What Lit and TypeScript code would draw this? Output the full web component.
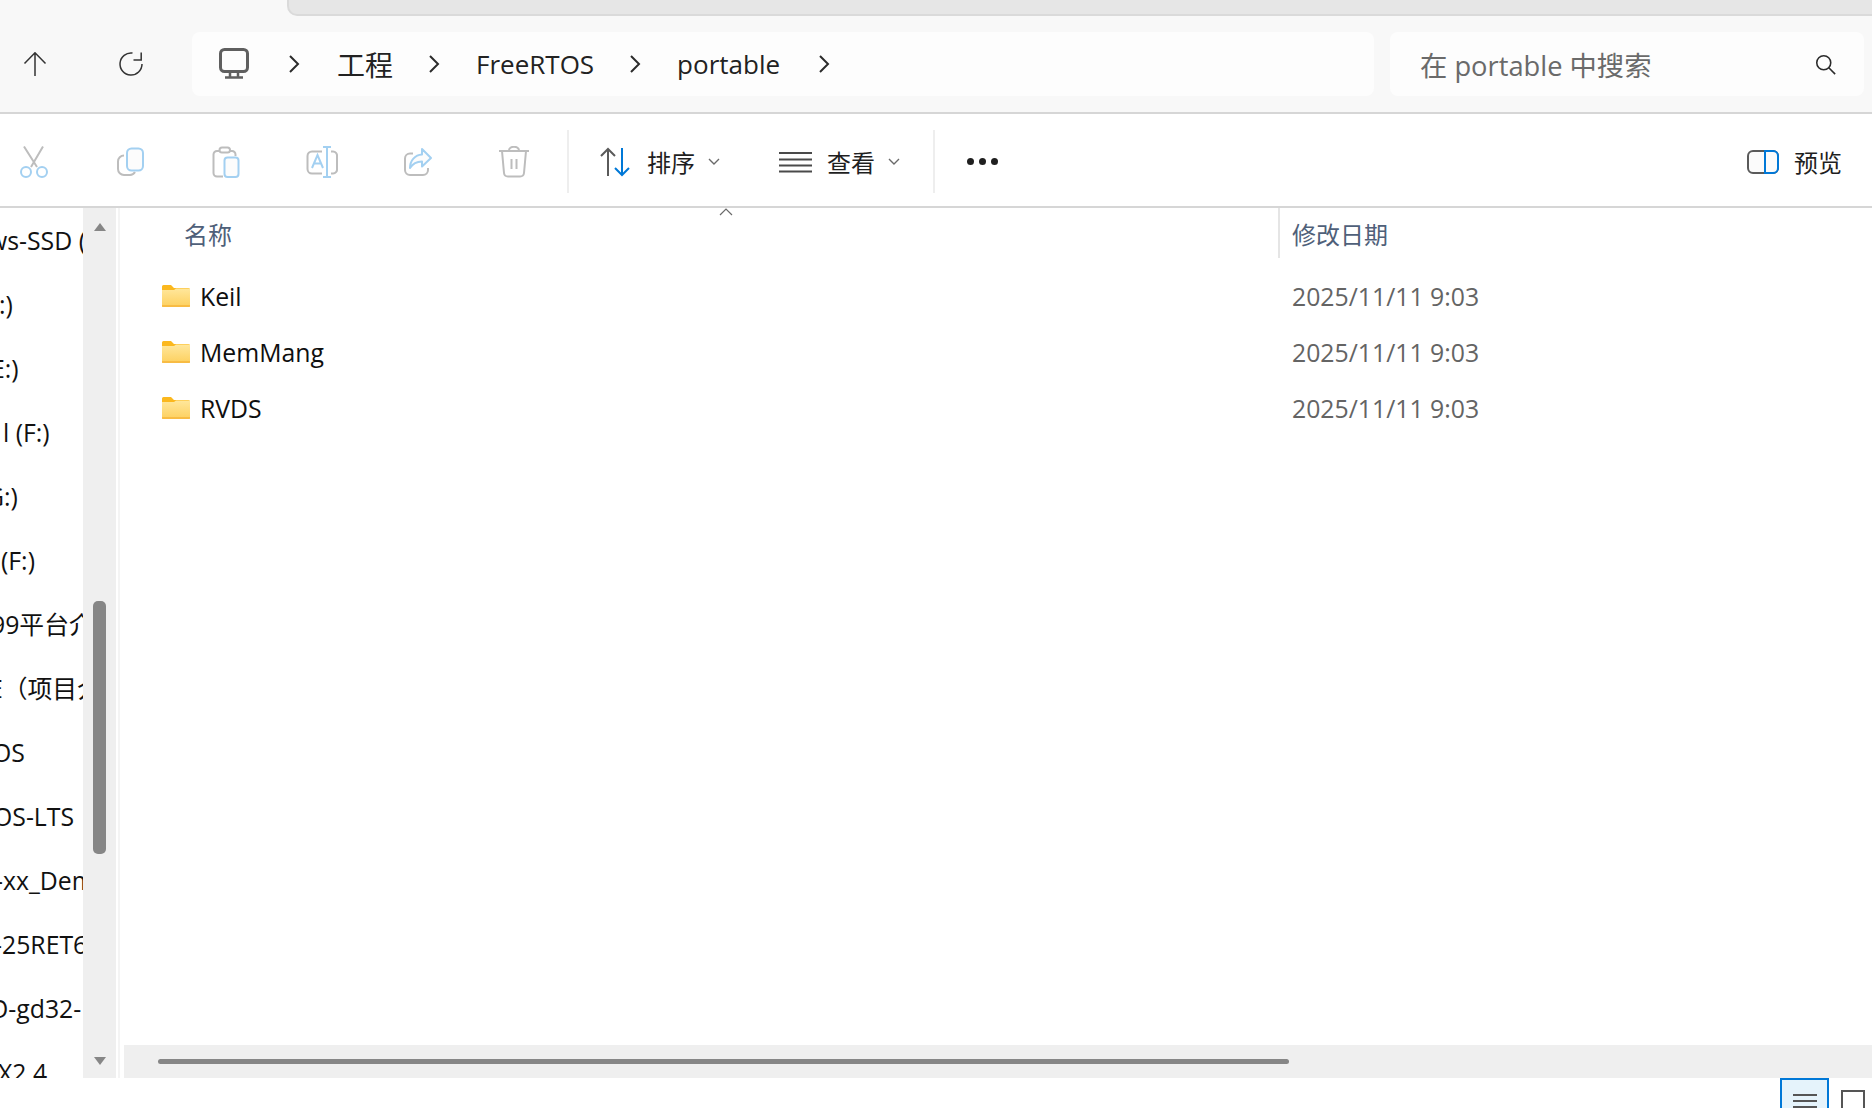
import { LitElement, html, css, svg } from "lit";
import { customElement } from "lit/decorators.js";

const GR = "#bdbdbd";
const BL = "#a3d0f1";

const cut = svg`<g fill="none" stroke-width="2"><path d="M6 .5 19 21M25 .5 13 21" stroke="${GR}"/><circle cx="8" cy="26" r="5" stroke="${BL}"/><circle cx="24" cy="26" r="5" stroke="${BL}"/></g>`;
const copy = svg`<g fill="none" stroke-width="2"><path d="M10 9.500a6 6 0 0 0-6 6V23a6 6 0 0 0 6 6h6a6 6 0 0 0 5-3" stroke="${GR}"/><rect x="13" y="2.500" width="16" height="22" rx="4.500" fill="#fcfcfc" stroke="${BL}"/></g>`;
const paste = svg`<g fill="none" stroke-width="2"><path d="M9 5H7a3.500 3.500 0 0 0-3.500 3.500V27A3.500 3.500 0 0 0 7 30.500h6M20 5h2a3.500 3.500 0 0 1 3.500 3.500V10" stroke="${GR}"/><rect x="9.500" y="1.500" width="10.500" height="5" rx="2.500" stroke="${GR}"/><rect x="14.500" y="11.500" width="14" height="19.500" rx="3" fill="#fcfcfc" stroke="${BL}"/></g>`;
const rename = svg`<g fill="none" stroke-width="2"><path d="M16 5.500H6A4.500 4.500 0 0 0 1.500 10v13A4.500 4.500 0 0 0 6 27.500h10M25 5.500h2a4 4 0 0 1 4 4.500v13a4 4 0 0 1-4 4.500h-2" stroke="${GR}"/><path d="M21 1v30M17 1h8M17 31h8M6 22 11.500 9 17 22M8 17.500h7" stroke="${BL}"/></g>`;
const share = svg`<g fill="none" stroke-width="2"><path d="M11 7.500H8a5 5 0 0 0-5 5V24a5 5 0 0 0 5 5h13a5 5 0 0 0 5-5v-2" stroke="${GR}"/><path d="M20 3 29 12 20 20.500V15.500C14.500 15.500 10.500 18 8 22 8 14.500 13 9 20 8.500Z" fill="#fcfcfc" stroke="${BL}" stroke-linejoin="round"/></g>`;
const trash = svg`<g fill="none" stroke="${GR}" stroke-width="2"><path d="M1 5h30M11 4.500a5 3.800 0 0 1 10 0M4 5l2 22a4 4 0 0 0 4 3.500h12a4 4 0 0 0 4-3.500l2-22M13.500 13v10M18.500 13v10"/></g>`;

function icon(body: unknown, size = 32) {
  return html`<svg class="ic" width=${size} height=${size} viewBox="0 0 32 32">${body}</svg>`;
}

const chevron = html`<svg class="chev" width="12" height="20" viewBox="0 0 12 20"><path d="M2 2l8 8-8 8" fill="none" stroke="#2b2b2b" stroke-width="2"/></svg>`;
const caret = html`<svg class="caret" width="12" height="8" viewBox="0 0 12 8"><path d="M1 1l5 5 5-5" fill="none" stroke="#6a6a6a" stroke-width="1.400"/></svg>`;

const sidebarRows: [string, number][] = [
  ["ws-SSD (C:)", -12],
  [":)", -1],
  ["E:)", -9],
  ["l (F:)", 3],
  ["G:)", -14],
  ["(F:)", 1],
  ["99平台介绍", -9],
  ["E（项目介绍", -11],
  ["OS", -8],
  ["OS-LTS", -7],
  ["-xx_Demo", -5],
  ["-25RET6", -6],
  ["O-gd32-", -11],
  ["X2.4", -2],
];

const files = ["Keil", "MemMang", "RVDS"];

@customElement("app-root")
export class AppRoot extends LitElement {
  static styles = css`
    :host {
      display: block;
      width: 1872px;
      height: 1108px;
      overflow: hidden;
      background: #fff;
      font-family: "Open Sans", "Noto Sans CJK SC", sans-serif;
      color: #1a1a1a;
    }
    svg { display: block; flex: none; }
    .topbar { background: #f8f8f8; height: 112px; border-bottom: 2px solid #d6d6d6; }
    .tabstrip {
      height: 14px;
      margin-left: 287px;
      background: #e6e6e6;
      border-left: 2px solid #dadada;
      border-bottom: 2px solid #dadada;
      border-bottom-left-radius: 10px;
    }
    .nav { display: flex; align-items: center; height: 64px; margin-top: 16px; }
    .navbtn { display: flex; justify-content: center; align-items: center; flex: none; }
    .up { width: 70px; }
    .refresh { width: 122px; }
    .crumbs {
      width: 1182px;
      height: 64px;
      background: #fdfdfd;
      border-radius: 8px;
      display: flex;
      align-items: center;
      gap: 35px;
      padding-left: 27px;
      box-sizing: border-box;
      font-size: 26px;
      color: #222;
    }
    .crumbs .cjk { font-size: 28px; }
    .crumbs .first { margin-left: 4px; margin-right: 2px; }
    .crumbs .name { margin-left: 1px; }
    .crumbs .last { margin-left: 3px; }
    .search {
      width: 474px;
      height: 64px;
      margin-left: 16px;
      background: #fdfdfd;
      border-radius: 8px;
      display: flex;
      align-items: center;
      justify-content: space-between;
      padding: 0 28px 0 30px;
      box-sizing: border-box;
      font-size: 27.300px;
      color: #6a6a6a;
    }
    .toolbar {
      height: 89px;
      padding-top: 3px;
      border-bottom: 2px solid #d6d6d6;
      display: flex;
      align-items: center;
      font-size: 24px;
      color: #1f1f1f;
    }
    .toolcell { width: 96px; flex: none; display: flex; justify-content: center; }
    .tools { display: flex; margin-left: -14px; }
    .sep { width: 2px; height: 63px; background: #eeeeee; flex: none; }
    .sep.a { margin-left: 5px; }
    .tbtn { display: flex; align-items: center; flex: none; }
    .sort { margin-left: 31px; gap: 15px; }
    .view { margin-left: 59px; gap: 15px; }
    .tbtn .caret { margin-left: -2px; }
    .sep.b { margin-left: 33px; }
    .dots { margin-left: 32px; display: flex; gap: 5px; }
    .dots i { width: 7px; height: 7px; border-radius: 50%; background: #1f1f1f; display: block; }
    .preview { margin-left: auto; margin-right: 30px; gap: 15px; }
    .main { display: flex; height: 870px; }
    .side { width: 83px; flex: none; overflow: hidden; font-size: 24.800px; color: #111; }
    .srow { height: 64px; line-height: 64px; white-space: nowrap; }
    .strack {
      width: 33px;
      flex: none;
      background: #efefef;
      display: flex;
      flex-direction: column;
      align-items: center;
      justify-content: space-between;
      padding: 15px 0 13px;
      box-sizing: border-box;
      position: relative;
    }
    .arrow { width: 0; height: 0; border-left: 6px solid transparent; border-right: 6px solid transparent; }
    .arrow.u { border-bottom: 8px solid #868686; }
    .arrow.d { border-top: 8px solid #868686; }
    .sthumb { position: absolute; left: 10px; top: 393px; width: 13px; height: 253px; background: #868686; border-radius: 5px; }
    .gutter { width: 2px; margin-left: 2px; background: #f4f4f4; flex: none; }
    .content { flex: 1; display: flex; flex-direction: column; margin-left: 4px; }
    .list { flex: 1; position: relative; }
    .head { display: flex; height: 50px; font-size: 24px; color: #4f6079; margin-bottom: 10px; }
    .hname { width: 1154px; flex: none; box-sizing: border-box; padding-left: 60px; line-height: 54px; position: relative; }
    .sortcaret { position: absolute; left: 595px; top: 0; }
    .hdate { border-left: 2px solid #e5e5e5; padding-left: 12px; line-height: 54px; }
    .row { display: flex; height: 56px; align-items: center; font-size: 24.800px; }
    .rname { width: 1168px; flex: none; display: flex; align-items: center; gap: 10px; padding-left: 38px; box-sizing: border-box; color: #0f0f0f; }
    .rname span { margin-bottom: 1px; }
    .rdate { color: #646464; margin-bottom: 1px; }
    .hscroll { height: 33px; background: #efefef; flex: none; position: relative; }
    .hthumb { position: absolute; left: 34px; top: 14px; height: 5px; width: 1131px; background: #868686; border-radius: 2.500px; }
    .footer { height: 30px; position: relative; display: flex; justify-content: flex-end; overflow: hidden; }
    .detail { width: 49px; height: 40px; box-sizing: border-box; border: 2px solid #0078d7; background: #e5f3fb; display: flex; flex-direction: column; gap: 4px; align-items: center; padding-top: 14px; flex: none; }
    .detail i { display: block; width: 24px; height: 2px; background: #555; flex: none; }
    .tile { width: 24px; height: 24px; box-sizing: border-box; border: 2px solid #555; margin: 12px 7px 0 12px; flex: none; }
  `;

  render() {
    return html`
      <div class="topbar">
        <div class="tabstrip"></div>
        <div class="nav">
          <div class="navbtn up">
            <svg width="24" height="24" viewBox="0 0 24 24"><path d="M12 24V.8M1.500 11.500 12 .8 22.500 11.500" fill="none" stroke="#333" stroke-width="1.500"/></svg>
          </div>
          <div class="navbtn refresh">
            <svg width="26" height="26" viewBox="0 0 26 26"><path d="M14.500 2.100A11 11 0 1 0 24 13" fill="none" stroke="#333" stroke-width="1.500"/><path d="M23.200 1.500V9H15.500" fill="none" stroke="#333" stroke-width="1.500"/></svg>
          </div>
          <div class="crumbs">
            <svg width="30" height="32" viewBox="0 0 30 32"><rect x="1.500" y="1.500" width="27" height="22" rx="4" fill="none" stroke="#5f5f5f" stroke-width="3"/><path d="M6 29.500h18M11 24v5M19 24v5" stroke="#5f5f5f" stroke-width="2.500" fill="none"/></svg>
            <span class="first">${chevron}</span>
            <span class="cjk">工程</span>
            ${chevron}
            <span class="name">FreeRTOS</span>
            ${chevron}
            <span class="name">portable</span>
            <span class="last">${chevron}</span>
          </div>
          <div class="search">
            <span>在 portable 中搜索</span>
            <svg width="21" height="21" viewBox="0 0 24 24"><circle cx="10" cy="10" r="8" fill="none" stroke="#2b2b2b" stroke-width="1.800"/><path d="M15.500 15.500 23 23" stroke="#2b2b2b" stroke-width="1.800"/></svg>
          </div>
        </div>
      </div>
      <div class="toolbar">
        <div class="tools">
          ${[cut, copy, paste, rename, share, trash].map((b) => html`<div class="toolcell">${icon(b)}</div>`)}
        </div>
        <div class="sep a"></div>
        <div class="tbtn sort">
          <svg width="32" height="30" viewBox="0 0 32 30"><path d="M8 29V2M1 9l7-7 7 7" fill="none" stroke="#5a5a5a" stroke-width="2"/><path d="M22 1v27M15 21l7 7 7-7" fill="none" stroke="#0078d7" stroke-width="2"/></svg>
          <span>排序</span>${caret}
        </div>
        <div class="tbtn view">
          <svg width="33" height="22" viewBox="0 0 33 22"><path d="M0 2h33M0 8.500h33M0 14.500h33M0 20.500h33" stroke="#4a4a4a" stroke-width="2"/></svg>
          <span>查看</span>${caret}
        </div>
        <div class="sep b"></div>
        <div class="dots"><i></i><i></i><i></i></div>
        <div class="tbtn preview">
          <svg width="32" height="24" viewBox="0 0 32 24"><rect x="1" y="1" width="30" height="22" rx="5" fill="#fbfbfb" stroke="#5a5a5a" stroke-width="2"/><path d="M18 1h8a5 5 0 0 1 5 5v12a5 5 0 0 1-5 5h-8z" fill="#fbfbfb" stroke="#0078d7" stroke-width="2"/></svg>
          <span>预览</span>
        </div>
      </div>
      <div class="main">
        <div class="side">
          ${sidebarRows.map(([t, m]) => html`<div class="srow" style="margin-left:${m}px">${t}</div>`)}
        </div>
        <div class="strack">
          <div class="arrow u"></div>
          <div class="sthumb"></div>
          <div class="arrow d"></div>
        </div>
        <div class="gutter"></div>
        <div class="content">
          <div class="list">
            <div class="head">
              <div class="hname">名称
                <svg class="sortcaret" width="14" height="8" viewBox="0 0 14 8"><path d="M1 7l6-6 6 6" fill="none" stroke="#6a6a6a" stroke-width="1.200"/></svg>
              </div>
              <div class="hdate">修改日期</div>
            </div>
            ${files.map(
              (f) => html`<div class="row">
                <div class="rname">
                  <svg width="28" height="22" viewBox="0 0 28 22">
                    <defs><linearGradient id="fg" x1="0" y1="0" x2="0" y2="1"><stop offset="0" stop-color="#ffe79c"/><stop offset="1" stop-color="#fdd05e"/></linearGradient></defs>
                    <path d="M0 1.500A1.500 1.500 0 0 1 1.500 0H9l3 3h14.500A1.500 1.500 0 0 1 28 4.500V6H0Z" fill="#fbb81e"/>
                    <path d="M0 5h12l2-1.500H28V20.500A1.500 1.500 0 0 1 26.500 22H1.500A1.500 1.500 0 0 1 0 20.500Z" fill="url(#fg)"/>
                    <path d="M0 21h28" stroke="#f6b53a" stroke-width="1.500"/>
                  </svg>
                  <span>${f}</span>
                </div>
                <div class="rdate">2025/11/11 9:03</div>
              </div>`
            )}
          </div>
          <div class="hscroll"><div class="hthumb"></div></div>
        </div>
      </div>
      <div class="footer">
        <div class="detail"><i></i><i></i><i></i></div>
        <div class="tile"></div>
      </div>
    `;
  }
}
